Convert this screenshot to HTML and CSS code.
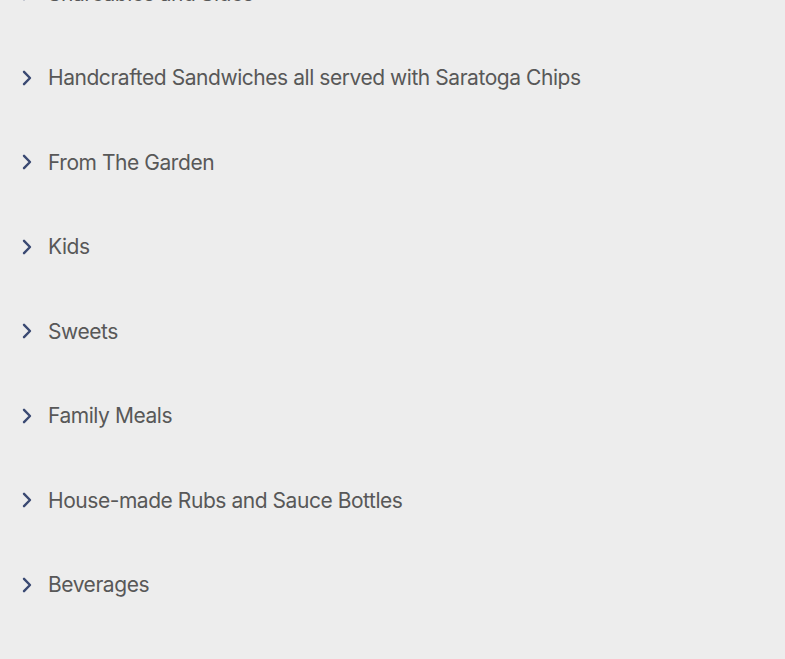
FILE: index.html
```html
<!DOCTYPE html>
<html>
<head>
<meta charset="utf-8">
<link rel="stylesheet" href="styles.css">
</head>
<body>
<ul class="menu">
  <li class="item"><svg class="chev" viewBox="0 0 10 16"><path d="M2 1.8 L8 8 L2 14.2" /></svg><span class="label">Shareables and Sides</span></li>
  <li class="item"><svg class="chev" viewBox="0 0 10 16"><path d="M2 1.8 L8 8 L2 14.2" /></svg><span class="label">Handcrafted Sandwiches all served with Saratoga Chips</span></li>
  <li class="item"><svg class="chev" viewBox="0 0 10 16"><path d="M2 1.8 L8 8 L2 14.2" /></svg><span class="label">From The Garden</span></li>
  <li class="item"><svg class="chev" viewBox="0 0 10 16"><path d="M2 1.8 L8 8 L2 14.2" /></svg><span class="label">Kids</span></li>
  <li class="item"><svg class="chev" viewBox="0 0 10 16"><path d="M2 1.8 L8 8 L2 14.2" /></svg><span class="label">Sweets</span></li>
  <li class="item"><svg class="chev" viewBox="0 0 10 16"><path d="M2 1.8 L8 8 L2 14.2" /></svg><span class="label">Family Meals</span></li>
  <li class="item"><svg class="chev" viewBox="0 0 10 16"><path d="M2 1.8 L8 8 L2 14.2" /></svg><span class="label">House-made Rubs and Sauce Bottles</span></li>
  <li class="item"><svg class="chev" viewBox="0 0 10 16"><path d="M2 1.8 L8 8 L2 14.2" /></svg><span class="label">Beverages</span></li>
</ul>
</body>
</html>
```
FILE: styles.css
```css
html, body {
  margin: 0;
  padding: 0;
  background: #ededed;
  overflow: hidden;
}
body {
  height: 659px;
}
.menu {
  list-style: none;
  margin: -49px 0 0 0;
  padding: 0 0 0 22px;
}
.item {
  display: flex;
  align-items: center;
  height: 84.5px;
}
.chev {
  width: 10px;
  height: 16px;
  flex: none;
  fill: none;
  stroke: #3a4972;
  stroke-width: 2.4;
  stroke-linecap: round;
  stroke-linejoin: round;
  margin-right: 16px;
}
.label {
  font-family: Inter, "Noto Sans", sans-serif;
  font-size: 21px;
  color: #585858;
  letter-spacing: -0.45px;
}
```
